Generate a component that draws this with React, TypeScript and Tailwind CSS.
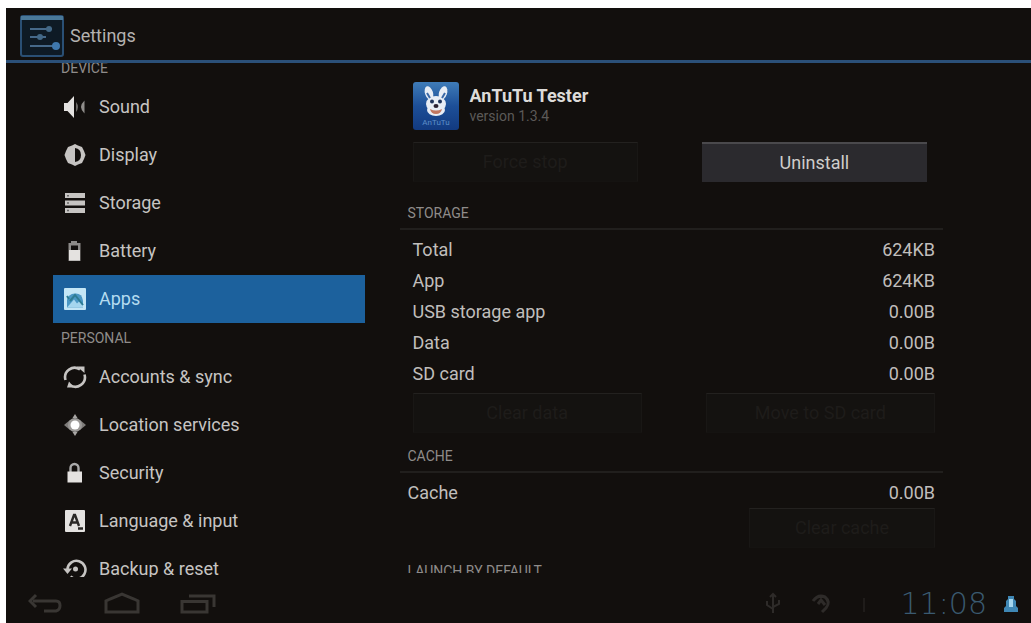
import React, { useState } from "react";

type MenuItem = {
  id: string;
  label: string;
  icon: React.ReactNode;
};

type SizeRow = {
  name: string;
  value: string;
};

const SoundIcon = () => (
  <svg viewBox="0 0 24 24" className="h-6 w-6" fill="currentColor">
    <path d="M1 8h3.500L11 1v22l-6.500-7H1z" fill="#e4e2e0" />
    <path d="M13 7q4 5 0 10z" opacity="0.5" />
    <path d="M21.500 5.500q-7 6.500 0 13z" opacity="0.7" />
  </svg>
);

const DisplayIcon = () => (
  <svg viewBox="0 0 24 24" className="h-6 w-6" fill="currentColor">
    <path
      fillRule="evenodd"
      d="M12 1l3 1.500 4 1.500 2 4 1.500 4-1.500 4-2 4-4 1.500-3 1.500-3-1.500-4-1.500-2-4L1.500 12 3 8l2-4 4-1.500zM12 5v14q6-1 6-7t-6-7z"
    />
  </svg>
);

const StorageIcon = () => (
  <svg viewBox="0 0 24 24" className="h-6 w-6">
    <path d="M2 2h20v5H2zM2 9.500h20v5H2zM2 17h20v5H2z" fill="currentColor" />
    <path d="M4 4h2v1.500H4zM4 11.300h2v1.500H4zM4 18.800h2v1.500H4z" fill="#666" />
  </svg>
);

const BatteryIcon = () => (
  <svg viewBox="0 0 24 24" className="h-6 w-6">
    <path d="M8 2h6v2h3.500v18h-12V4H8z" fill="#8c8a88" />
    <path d="M8 6.500h7V11H8z" fill="#120f0d" />
    <path d="M6 11h11v10.500H6z" fill="#e4e2e0" />
  </svg>
);

const AppsIcon = () => (
  <svg viewBox="0 0 24 24" className="h-6 w-6">
    <rect x="1" y="1" width="22" height="22" rx="1" fill="#c4e6f6" />
    <path d="M4 20.500V13q1-6 8-6.500t8 7v7z" fill="#4a97c4" />
    <path d="M4 20.500l7-8 3 4 2-2 4 4v2z" fill="#a5d6ee" />
    <path d="M6 12l-2-3M7 14l5-6 8 10" stroke="#2d7c93" strokeWidth="2" fill="none" />
  </svg>
);

const SyncIcon = () => (
  <svg viewBox="0 0 24 24" className="h-6 w-6">
    <g fill="none" stroke="currentColor" strokeWidth="2.600">
      <path d="M2.500 15A9.500 9.500 0 0 1 17 4.500" />
      <path d="M21.500 9.500A9.500 9.500 0 0 1 7 20" />
    </g>
    <path d="M14 1.500h7.500v6.500zM11 22.500H4l2-6z" fill="currentColor" />
  </svg>
);

const LocationIcon = () => (
  <svg viewBox="0 0 24 24" className="h-6 w-6">
    <path d="M12 1l2.500 4h-5zM12 23l2.500-4h-5z" fill="#a8a6a4" />
    <path d="M1 12l6-5h10l6 5-6 5H7z" fill="#7d7b79" />
    <circle cx="12" cy="12" r="7" fill="#9b9997" />
    <circle cx="12" cy="12" r="4.500" fill="#fff" />
  </svg>
);

const LockIcon = () => (
  <svg viewBox="0 0 24 24" className="h-6 w-6">
    <path d="M7.500 11V7a4 4 0 0 1 8 0V11" fill="none" stroke="#aaa" strokeWidth="2.400" />
    <path d="M4.500 10.500h14.500V21.500H4.500z" fill="#e4e2e0" />
  </svg>
);

const LanguageIcon = () => (
  <svg viewBox="0 0 24 24" className="h-6 w-6">
    <rect x="2" y="1" width="20" height="22" rx="1" fill="#e4e2e0" />
    <path
      d="M7 17l4-11h1l4 11M8 13.500h6.500M15 19.500h5"
      fill="none"
      stroke="#2a2826"
      strokeWidth="2.400"
    />
  </svg>
);

const BackupIcon = () => (
  <svg viewBox="0 0 24 24" className="h-6 w-6">
    <path
      d="M4.500 12A9 9 0 1 1 7.500 19.500"
      fill="none"
      stroke="currentColor"
      strokeWidth="2.600"
    />
    <path d="M0 11.500h9L4.500 17z" fill="currentColor" />
    <circle cx="12.500" cy="12" r="2.500" fill="currentColor" />
  </svg>
);

const SettingsLogo = () => (
  <svg viewBox="0 0 44 42" className="h-[42px] w-11">
    <rect x="1" y="1" width="42" height="40" rx="2" fill="#0e1a25" stroke="#2a4f74" strokeWidth="2" />
    <path d="M1 3h42" stroke="#4a7898" strokeWidth="4" />
    <path d="M10 14h22M10 22h16M10 31h24" stroke="#46698a" strokeWidth="2" />
    <circle cx="29" cy="14" r="3" fill="#436887" />
    <circle cx="20" cy="22" r="3" fill="#436887" />
    <circle cx="36" cy="31" r="4" fill="#3f78ad" />
  </svg>
);

const AntutuLogo = () => (
  <svg viewBox="0 0 46 48" className="h-12 w-[46px] shrink-0">
    <defs>
      <linearGradient id="antutuBg" x1="0" y1="0" x2="0" y2="1">
        <stop offset="0" stopColor="#3f7cb8" />
        <stop offset="0.5" stopColor="#1d4f98" />
        <stop offset="1" stopColor="#123a80" />
      </linearGradient>
    </defs>
    <rect width="46" height="48" rx="3" fill="url(#antutuBg)" />
    <g fill="#e8edf5">
      <ellipse cx="16" cy="11" rx="4" ry="7" transform="rotate(-18 16 11)" />
      <ellipse cx="30" cy="11" rx="4" ry="7" transform="rotate(18 30 11)" />
      <ellipse cx="23" cy="22" rx="10" ry="8" />
      <ellipse cx="23" cy="28" rx="9" ry="6" />
    </g>
    <path d="M14 11l3 5M32 11l-3 5" stroke="#3a68a6" strokeWidth="2" />
    <circle cx="19" cy="19.500" r="2" fill="#20345c" />
    <circle cx="27" cy="19.500" r="2" fill="#20345c" />
    <ellipse cx="23" cy="24" rx="2.500" ry="2" fill="#2a2030" />
    <path d="M17 27q6 3 12 0-1 5-6 5t-6-5z" fill="#c07660" />
    <text
      x="23"
      y="43"
      textAnchor="middle"
      fontSize="8"
      fontFamily="Roboto, sans-serif"
      fill="#5d8ec8"
    >
      AnTuTu
    </text>
  </svg>
);

const deviceItems: MenuItem[] = [
  { id: "sound", label: "Sound", icon: <SoundIcon /> },
  { id: "display", label: "Display", icon: <DisplayIcon /> },
  { id: "storage", label: "Storage", icon: <StorageIcon /> },
  { id: "battery", label: "Battery", icon: <BatteryIcon /> },
  { id: "apps", label: "Apps", icon: <AppsIcon /> },
];

const personalItems: MenuItem[] = [
  { id: "accounts", label: "Accounts & sync", icon: <SyncIcon /> },
  { id: "location", label: "Location services", icon: <LocationIcon /> },
  { id: "security", label: "Security", icon: <LockIcon /> },
  { id: "language", label: "Language & input", icon: <LanguageIcon /> },
  { id: "backup", label: "Backup & reset", icon: <BackupIcon /> },
];

const storageRows: SizeRow[] = [
  { name: "Total", value: "624KB" },
  { name: "App", value: "624KB" },
  { name: "USB storage app", value: "0.00B" },
  { name: "Data", value: "0.00B" },
  { name: "SD card", value: "0.00B" },
];

type MenuGroupProps = {
  title: string;
  items: MenuItem[];
  selected: string;
  onSelect: (id: string) => void;
};

const MenuGroup: React.FC<MenuGroupProps> = ({ title, items, selected, onSelect }) => (
  <section>
    <h2 className="flex h-[30px] items-center pl-2 text-sm text-[#8f8c8a]">{title}</h2>
    <ul>
      {items.map((item) => (
        <li key={item.id}>
          <button
            type="button"
            onClick={() => onSelect(item.id)}
            className={`flex h-12 w-full items-center gap-3 pl-[10px] text-left text-lg ${
              selected === item.id ? "bg-[#1c619d] text-[#b4dcf0]" : "text-[#c6c4c2]"
            }`}
          >
            {item.icon}
            <span>{item.label}</span>
          </button>
        </li>
      ))}
    </ul>
  </section>
);

const SizeTable: React.FC<{ label: string; rows: SizeRow[] }> = ({ label, rows }) => (
  <table aria-label={label} className="w-full text-lg text-[#c0bebc]">
    <tbody>
      {rows.map((row) => (
        <tr key={row.name} className="h-[31px]">
          <th scope="row" className="p-0 text-left font-normal">
            {row.name}
          </th>
          <td className="p-0 text-right">{row.value}</td>
        </tr>
      ))}
    </tbody>
  </table>
);

const SectionTitle: React.FC<{ children: React.ReactNode }> = ({ children }) => (
  <h3 className="flex h-8 items-center border-b-2 border-[#211f1d] pl-2 text-sm text-[#8f8c8a]">
    {children}
  </h3>
);

const DisabledButton: React.FC<{ children: React.ReactNode }> = ({ children }) => (
  <button
    type="button"
    disabled
    className="h-10 w-full border border-t-[#23211f] border-x-[#191715] border-b-[#151311] bg-[#141210] text-lg text-[#1e1c1a]"
  >
    {children}
  </button>
);

const App: React.FC = () => {
  const [selected, setSelected] = useState("apps");

  return (
    <div className="h-screen bg-white pt-2 pl-[6px] font-[Roboto,sans-serif]">
      <div className="flex h-full flex-col bg-[#120f0d]">
        <header className="flex h-[55px] shrink-0 items-center gap-[6px] border-b-3 border-[#2b5078] pt-1 pl-[14px]">
          <SettingsLogo />
          <h1 className="text-lg text-[#b4b2b0]">Settings</h1>
        </header>

        <main className="flex min-h-0 flex-1 pr-[88px] pl-[47px]">
          <nav aria-label="Settings" className="w-[35%] shrink-0 overflow-hidden">
            <div className="-mt-[10px]">
              <MenuGroup
                title="DEVICE"
                items={deviceItems}
                selected={selected}
                onSelect={setSelected}
              />
              <MenuGroup
                title="PERSONAL"
                items={personalItems}
                selected={selected}
                onSelect={setSelected}
              />
            </div>
          </nav>

          <section className="mb-1 ml-[35px] min-w-0 flex-1 overflow-hidden pt-[19px]">
            <div className="flex gap-[11px] pl-[13px]">
              <AntutuLogo />
              <div className="pt-1">
                <h2 className="text-lg leading-5 font-bold text-[#dddbd9]">AnTuTu Tester</h2>
                <p className="text-sm leading-5 text-[#5c5a58]">version 1.3.4</p>
              </div>
            </div>

            <div className="mt-3 grid grid-cols-2 gap-16 pr-4 pl-[13px]">
              <DisabledButton>Force stop</DisabledButton>
              <button
                type="button"
                className="h-10 w-full border-t-2 border-[#4a494c] bg-[#2b2a2e] text-lg text-[#cfcdcb]"
              >
                Uninstall
              </button>
            </div>

            <div className="mt-4">
              <SectionTitle>STORAGE</SectionTitle>
              <div className="pt-1 pr-2 pl-[13px]">
                <SizeTable label="Storage" rows={storageRows} />
                <div className="mt-1 grid grid-cols-2 gap-16">
                  <DisabledButton>Clear data</DisabledButton>
                  <DisabledButton>Move to SD card</DisabledButton>
                </div>
              </div>
            </div>

            <div className="mt-2">
              <SectionTitle>CACHE</SectionTitle>
              <div className="pt-1 pr-2 pl-2">
                <SizeTable label="Cache" rows={[{ name: "Cache", value: "0.00B" }]} />
                <div className="ml-auto w-[186px]">
                  <DisabledButton>Clear cache</DisabledButton>
                </div>
              </div>
            </div>

            <div className="mt-2">
              <SectionTitle>LAUNCH BY DEFAULT</SectionTitle>
            </div>
          </section>
        </main>

        <footer className="flex h-[46px] shrink-0 items-center pt-2 pr-3 pl-[22px]">
          <div className="flex items-center gap-10 text-[#393633]">
            <button type="button" aria-label="Back">
              <svg viewBox="0 0 36 24" className="h-6 w-9" fill="none" stroke="currentColor" strokeWidth="3">
                <path d="M5 9h23q4 0 4 4.500T28 19H16" />
                <path d="M8 3L2 9l6 6" />
              </svg>
            </button>
            <button type="button" aria-label="Home">
              <svg viewBox="0 0 36 24" className="h-6 w-9" fill="none" stroke="currentColor" strokeWidth="3">
                <path d="M2 20V9l4-2L18 2l12 5 4 2v11z" />
              </svg>
            </button>
            <button type="button" aria-label="Recent apps">
              <svg viewBox="0 0 36 24" className="h-6 w-9" fill="none" stroke="currentColor" strokeWidth="3">
                <path d="M2 9.500h25V20H2z" />
                <path d="M9 4h25v11" />
              </svg>
            </button>
          </div>

          <div className="ml-auto flex items-center gap-7 text-[#2e2b29]">
            <svg viewBox="0 0 20 24" className="h-6 w-5" fill="none" stroke="currentColor" strokeWidth="2">
              <path d="M10 3v18M4 9v4l6 4M16 8v4l-6 3M7 5l3-3 3 3" />
            </svg>
            <svg viewBox="0 0 20 24" className="h-6 w-5" fill="none" stroke="currentColor" strokeWidth="3">
              <path d="M2 9q5-7 12-4 6 5 1 11l-4 4M7 12l3-4 4 5" />
            </svg>
            <svg viewBox="0 0 10 24" className="h-6 w-[10px]" stroke="#1f1c1a" strokeWidth="2">
              <path d="M5 6v14" />
            </svg>
          </div>
          <time className="ml-8 font-['DejaVu_Sans',sans-serif] text-[30px] leading-8 font-extralight text-[#3a5a70]">
            11:08
          </time>
          <svg viewBox="0 0 16 18" className="ml-4 h-[18px] w-4">
            <path d="M5 1h6v3l2 2v5l2 2v4H1v-4l2-2V6l2-2z" fill="#3f87b4" />
            <path d="M6 4h4v8H6z" fill="#a5d6ee" />
          </svg>
        </footer>
      </div>
    </div>
  );
};

export default App;
